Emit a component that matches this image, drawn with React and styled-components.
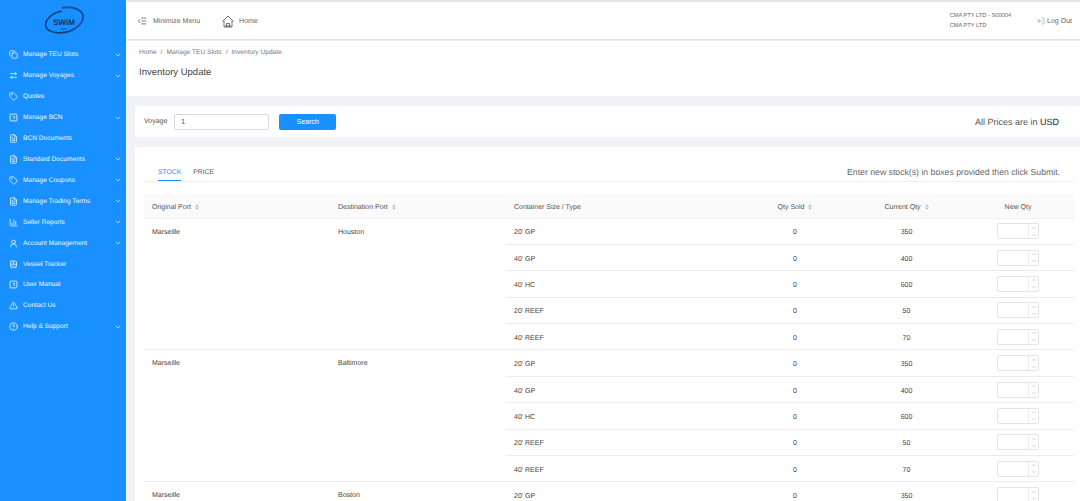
import React from "react";
import styled, { createGlobalStyle } from "styled-components";
import {
  ChevronDown,
  Copy,
  ArrowRightLeft,
  Tag,
  FileText,
  BarChart3,
  UserRound,
  TramFront,
  TriangleAlert,
  CircleHelp,
  IndentDecrease,
  LogOut,
  ChevronUp,
} from "lucide-react";

const GlobalStyle = createGlobalStyle`
  html, body {
    margin: 0;
    height: 501px;
    overflow: hidden;
    background: #f0f2f5;
    font-family: "Liberation Sans", Arial, sans-serif;
    text-rendering: geometricPrecision;
  }
  * { box-sizing: border-box; }
`;

const BookIcon = ({ size }) => (
  <svg width={size} height={size} viewBox="0 0 24 24" fill="none" stroke="currentColor" strokeWidth="2.2">
    <rect x="3" y="3" width="18" height="18" rx="1.5" />
    <path d="M14 8v8M10.5 9h3.5" />
  </svg>
);

const HouseIcon = () => (
  <svg width="12" height="13" viewBox="0 0 24 26" fill="none" stroke="#555" strokeWidth="1.7">
    <path d="M1 13 12 2l11 11" />
    <path d="M4 11v13h16V11" />
    <path d="M9 24v-7h6v7" />
    <path d="M6 22h12" />
  </svg>
);

const menu = [
  { label: "Manage TEU Slots", icon: Copy, arrow: true },
  { label: "Manage Voyages", icon: ArrowRightLeft, arrow: true },
  { label: "Quotes", icon: Tag },
  { label: "Manage BCN", icon: BookIcon, arrow: true },
  { label: "BCN Documents", icon: FileText },
  { label: "Standard Documents", icon: FileText, arrow: true },
  { label: "Manage Coupons", icon: Tag, arrow: true },
  { label: "Manage Trading Terms", icon: FileText, arrow: true },
  { label: "Seller Reports", icon: BarChart3, arrow: true },
  { label: "Account Management", icon: UserRound, arrow: true },
  { label: "Vessel Tracker", icon: TramFront },
  { label: "User Manual", icon: BookIcon },
  { label: "Contact Us", icon: TriangleAlert },
  { label: "Help & Support", icon: CircleHelp, arrow: true },
];

const sizes = [
  { size: "20' GP", current: 350 },
  { size: "40' GP", current: 400 },
  { size: "40' HC", current: 600 },
  { size: "20' REEF", current: 50 },
  { size: "40' REEF", current: 70 },
];

const routes = [
  { from: "Marseille", to: "Houston", rows: sizes },
  { from: "Marseille", to: "Baltimore", rows: sizes },
  { from: "Marseille", to: "Boston", rows: sizes.slice(0, 1) },
];

const Page = styled.div`
  display: flex;
  width: 1080px;
  height: 501px;
  overflow: hidden;
  color: #595959;
  font-size: 7px;
`;

const Sidebar = styled.aside`
  flex: 0 0 126px;
  background: #1890ff;
  padding-top: 2px;
`;

const LogoBox = styled.div`
  display: flex;
  justify-content: center;
  height: 42.5px;
  padding: 2px 0 0 4px;
`;

const MenuItem = styled.div`
  display: flex;
  align-items: center;
  height: 20.92px;
  padding: 0 4px 0 9px;
  color: #eef7ff;
  font-size: 6.6px;
  span {
    flex: 1;
    margin-left: 5px;
  }
`;

const Main = styled.main`
  flex: 1;
  min-width: 0;
  display: flex;
  flex-direction: column;
  > * {
    flex: none;
  }
`;

const TopStrip = styled.div`
  height: 2px;
  background: #e8e8e8;
`;

const Header = styled.header`
  display: flex;
  align-items: center;
  height: 37px;
  padding: 1px 8px 0 11px;
  background: #fff;
  box-shadow: 0 1px 2px rgba(0, 0, 0, 0.08);
`;

const HeaderLink = styled.div`
  display: flex;
  align-items: center;
  gap: ${(p) => p.$gap}px;
  margin-right: ${(p) => p.$right || 0}px;
  color: #666;
  font-size: 7px;
`;

const Account = styled.div`
  margin-left: auto;
  margin-right: 26px;
  line-height: 10px;
  font-size: 5.7px;
  color: #666;
`;

const LogOutIcon = styled(LogOut)`
  transform: scaleX(-1);
`;

const PageHead = styled.section`
  height: 55px;
  margin-top: 2px;
  padding: 7px 13px;
  background: #fff;
`;

const Crumbs = styled.div`
  font-size: 6.6px;
  color: #777;
  line-height: 9px;
  i {
    font-style: normal;
    margin: 0 4px;
  }
`;

const Title = styled.h1`
  margin: 10px 0 0;
  font-size: 9.5px;
  line-height: 12px;
  font-weight: 400;
  color: #444;
`;

const Content = styled.div`
  padding: 10px 0 0 9px;
  display: flex;
  flex-direction: column;
  gap: 10px;
`;

const SearchCard = styled.section`
  display: flex;
  flex: none;
  align-items: center;
  height: 31px;
  padding: 0 21px 0 9px;
  background: #fff;
`;

const FieldLabel = styled.label`
  font-size: 7px;
  color: #555;
  margin-right: 7px;
`;

const VoyageInput = styled.input`
  width: 95px;
  height: 16px;
  padding: 0 6px;
  border: 1px solid #d9d9d9;
  border-radius: 2px;
  font: 7px "Liberation Sans", Arial, sans-serif;
  color: #555;
  background: #fff;
`;

const SearchButton = styled.button`
  width: 57px;
  height: 16px;
  margin-left: 10px;
  border: 0;
  border-radius: 2px;
  background: #1890ff;
  color: #fff;
  font: 7px "Liberation Sans", Arial, sans-serif;
`;

const Currency = styled.div`
  margin-left: auto;
  font-size: 9px;
  color: #555;
  b {
    font-weight: 400;
    color: #222;
  }
`;

const TableCard = styled.section`
  flex: none;
  padding: 8px 6px 0 9px;
  background: #fff;
  height: 360px;
`;

const TabBar = styled.div`
  display: flex;
  align-items: flex-end;
  height: 27px;
  border-bottom: 1px solid #f0f0f0;
  padding-left: 14px;
`;

const Tab = styled.div`
  height: 27px;
  line-height: 37px;
  margin-right: 12px;
  font-size: 6.8px;
  color: ${(p) => (p.$active ? "#1890ff" : "#555")};
  border-bottom: 1px solid ${(p) => (p.$active ? "#1890ff" : "transparent")};
`;

const Hint = styled.div`
  margin-left: auto;
  align-self: center;
  margin-right: 14px;
  padding-top: 7px;
  font-size: 8.7px;
  color: #666;
`;

const Table = styled.table`
  width: 100%;
  margin-top: 12px;
  table-layout: fixed;
  border-collapse: collapse;
`;

const Th = styled.th`
  height: 24px;
  padding: 3px 8px 0;
  background: #fafafa;
  border-bottom: 1px solid #f0f0f0;
  font-size: 7px;
  font-weight: 400;
  color: #555;
  text-align: ${(p) => p.$align || "left"};
`;

const Td = styled.td`
  height: 26.4px;
  padding: ${(p) => (p.$top ? 10 : p.$flush ? 0 : 3)}px 8px 0;
  border-bottom: 1px solid #ececec;
  font-size: 7px;
  color: #444;
  text-align: ${(p) => p.$align || "left"};
  vertical-align: ${(p) => (p.$top ? "top" : "middle")};
`;

const Sorter = styled.svg`
  width: 4px;
  height: 6px;
  margin-left: 2px;
  vertical-align: -1px;
  fill: #bfbfbf;
`;

const Stepper = styled.div`
  display: inline-flex;
  width: 42px;
  height: 16px;
  vertical-align: middle;
  border: 1px solid #e4e4e4;
  border-radius: 2px;
  background: #fff;
`;

const StepInput = styled.div`
  flex: 1;
`;

const StepArrows = styled.div`
  width: 10px;
  display: flex;
  flex-direction: column;
  align-items: center;
  justify-content: space-around;
  border-left: 1px solid #ececec;
  color: #a8a8a8;
`;

const Sort = () => (
  <Sorter viewBox="0 0 5 7">
    <path d="M2.5 0 5 2.8H0zM2.5 7 0 4.2h5z" />
  </Sorter>
);

const Logo = () => (
  <svg width="44" height="36" viewBox="0 0 44 36" fill="none">
    <path d="M19 7C8 9 1 17 3 23c2 6 17 8 27 3" stroke="#1f3a7a" strokeWidth="1.6" />
    <path d="M19 4c9-2 19 1 21 7 1 6-4 12-13 16" stroke="#1c4f9e" strokeWidth="2" />
    <text x="21" y="21" textAnchor="middle" fontFamily="Liberation Sans" fontSize="8" fontWeight="700" fill="#1a2f66">
      SWiM
    </text>
    <text x="21" y="26" textAnchor="middle" fontFamily="Liberation Sans" fontSize="3" fill="#1a2f66">
      GOS
    </text>
  </svg>
);

const QtyBox = () => (
  <Stepper>
    <StepInput />
    <StepArrows>
      <ChevronUp size={6} />
      <ChevronDown size={6} />
    </StepArrows>
  </Stepper>
);

export default function App() {
  return (
    <Page>
      <GlobalStyle />
      <Sidebar>
        <LogoBox>
          <Logo />
        </LogoBox>
        {menu.map((item) => (
          <MenuItem key={item.label}>
            <item.icon size={9} strokeWidth={2} />
            <span>{item.label}</span>
            {item.arrow && <ChevronDown size={8} strokeWidth={2} />}
          </MenuItem>
        ))}
      </Sidebar>
      <Main>
        <TopStrip />
        <Header>
          <HeaderLink $gap={6} $right={22}>
            <IndentDecrease size={10} strokeWidth={2} />
            Minimize Menu
          </HeaderLink>
          <HeaderLink $gap={5}>
            <HouseIcon />
            Home
          </HeaderLink>
          <Account>
            CMA PTY LTD - S00004
            <br />
            CMA PTY LTD
          </Account>
          <HeaderLink $gap={2}>
            <LogOutIcon size={8} strokeWidth={1.3} />
            Log Out
          </HeaderLink>
        </Header>
        <PageHead>
          <Crumbs>
            Home<i>/</i>Manage TEU Slots<i>/</i>Inventory Update
          </Crumbs>
          <Title>Inventory Update</Title>
        </PageHead>
        <Content>
          <SearchCard>
            <FieldLabel>Voyage</FieldLabel>
            <VoyageInput defaultValue="1" />
            <SearchButton>Search</SearchButton>
            <Currency>
              All Prices are in <b>USD</b>
            </Currency>
          </SearchCard>
          <TableCard>
            <TabBar>
              <Tab $active>STOCK</Tab>
              <Tab>PRICE</Tab>
              <Hint>Enter new stock(s) in boxes provided then click Submit.</Hint>
            </TabBar>
            <Table>
              <colgroup>
                <col style={{ width: 186 }} />
                <col style={{ width: 176 }} />
                <col style={{ width: 233 }} />
                <col style={{ width: 112 }} />
                <col style={{ width: 111 }} />
                <col style={{ width: 112 }} />
              </colgroup>
              <thead>
                <tr>
                  <Th>
                    Original Port <Sort />
                  </Th>
                  <Th>
                    Destination Port <Sort />
                  </Th>
                  <Th>Container Size / Type</Th>
                  <Th $align="center">
                    Qty Sold <Sort />
                  </Th>
                  <Th $align="center">
                    Current Qty <Sort />
                  </Th>
                  <Th $align="center">New Qty</Th>
                </tr>
              </thead>
              <tbody>
                {routes.map((route) =>
                  route.rows.map((row, i) => (
                    <tr key={route.to + row.size}>
                      {i === 0 && (
                        <>
                          <Td $top rowSpan={route.rows.length}>
                            {route.from}
                          </Td>
                          <Td $top rowSpan={route.rows.length}>
                            {route.to}
                          </Td>
                        </>
                      )}
                      <Td>{row.size}</Td>
                      <Td $align="center">0</Td>
                      <Td $align="center">{row.current}</Td>
                      <Td $align="center" $flush>
                        <QtyBox />
                      </Td>
                    </tr>
                  ))
                )}
              </tbody>
            </Table>
          </TableCard>
        </Content>
      </Main>
    </Page>
  );
}
